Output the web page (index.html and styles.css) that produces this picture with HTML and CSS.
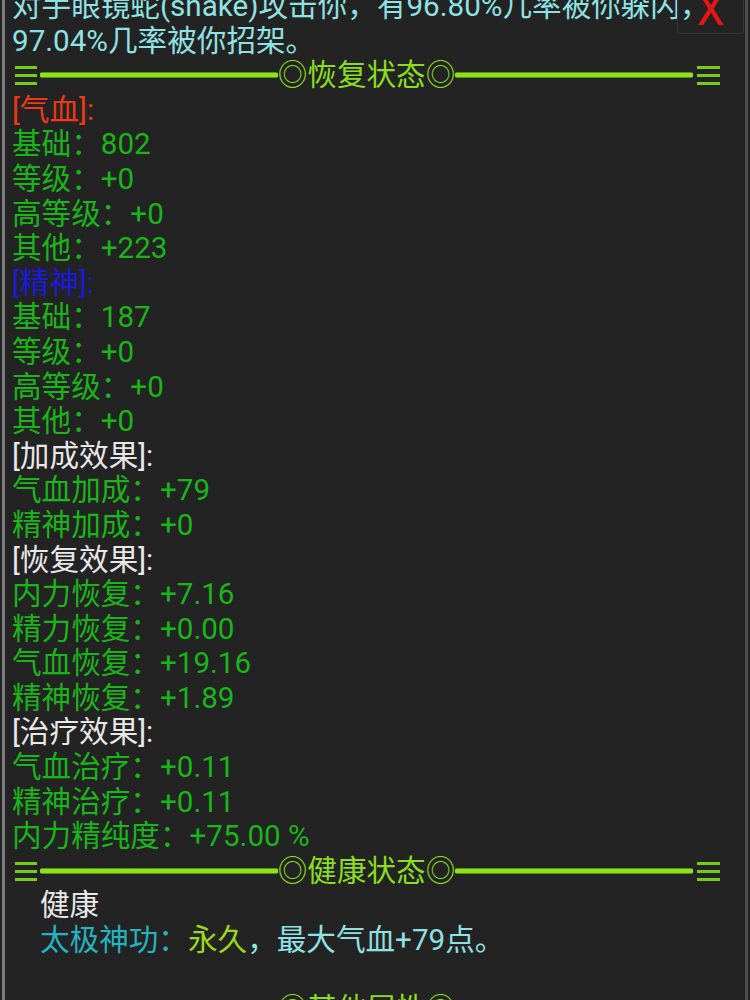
FILE: index.html
```html
<!DOCTYPE html>
<html lang="zh-CN">
<head>
    <meta charset="UTF-8">
    <meta name="viewport" content="width=device-width, initial-scale=1.0">
    <title>恢复状态</title>
    <link rel="stylesheet" href="styles.css">
</head>
<body>
    <div class="panel">
        <div class="close">X</div>

        <div class="log">
            <p class="msg">对手眼镜蛇(snake)攻击你，有96.80%几率被你躲闪，97.04%几率被你招架。</p>

            <div class="divider">
                <span class="eq"><i></i><i></i><i></i></span>
                <span class="rule"></span>
                <span class="title">◎恢复状态◎</span>
                <span class="rule"></span>
                <span class="eq"><i></i><i></i><i></i></span>
            </div>

            <p class="red">[气血]:</p>
            <p class="green">基础：802</p>
            <p class="green">等级：+0</p>
            <p class="green">高等级：+0</p>
            <p class="green">其他：+223</p>
            <p class="blue">[精神]:</p>
            <p class="green">基础：187</p>
            <p class="green">等级：+0</p>
            <p class="green">高等级：+0</p>
            <p class="green">其他：+0</p>
            <p class="white">[加成效果]:</p>
            <p class="green">气血加成：+79</p>
            <p class="green">精神加成：+0</p>
            <p class="white">[恢复效果]:</p>
            <p class="green">内力恢复：+7.16</p>
            <p class="green">精力恢复：+0.00</p>
            <p class="green">气血恢复：+19.16</p>
            <p class="green">精神恢复：+1.89</p>
            <p class="white">[治疗效果]:</p>
            <p class="green">气血治疗：+0.11</p>
            <p class="green">精神治疗：+0.11</p>
            <p class="green">内力精纯度：+75.00 %</p>

            <div class="divider">
                <span class="eq"><i></i><i></i><i></i></span>
                <span class="rule"></span>
                <span class="title">◎健康状态◎</span>
                <span class="rule"></span>
                <span class="eq"><i></i><i></i><i></i></span>
            </div>

            <div class="health">
                <p class="white">健康</p>
                <p><span class="skill">太极神功：</span><span class="lime">永久</span><span class="msg">，最大气血+79点。</span></p>
                <p>&nbsp;</p>
            </div>

            <div class="divider">
                <span class="eq"><i></i><i></i><i></i></span>
                <span class="rule"></span>
                <span class="title">◎其他属性◎</span>
                <span class="rule"></span>
                <span class="eq"><i></i><i></i><i></i></span>
            </div>
        </div>
    </div>
</body>
</html>
```

FILE: styles.css
```css
* {
    margin: 0;
    padding: 0;
    box-sizing: border-box;
}

body {
    background: #232323;
    font-family: Roboto, "Noto Sans CJK SC", sans-serif;
    font-size: 29.6px;
    line-height: 34.6px;
    overflow: hidden;
}

.panel {
    position: relative;
    height: 100vh;
    margin: 0 2px;
    border-left: 3px solid #7a7a7a;
    border-right: 3px solid #4e4e4e;
    overflow: hidden;
}

.log {
    margin-top: -11px;
    padding-left: 7px;
}

.log p {
    white-space: pre-wrap;
}

/* colours */
.msg {
    color: #8fe2e4;
}

.red {
    color: #ec3a16;
}

.blue {
    color: #1a1adc;
}

.green {
    color: #19b519;
}

.white {
    color: #e8e8e8;
}

.skill {
    color: #22b4c2;
}

.lime {
    color: #9cd91a;
}

/* section divider */
.divider {
    display: flex;
    align-items: center;
    width: 705px;
    height: 34.6px;
    margin-left: 3px;
    color: #8ade1c;
}

.divider .title {
    white-space: nowrap;
}

.rule {
    flex: 1;
    height: 6px;
    border-radius: 2px;
    background: linear-gradient(#3c6a0e, #8fe31b 25%, #8fe31b 75%, #3c6a0e);
}

.eq {
    display: flex;
    flex-direction: column;
    gap: 5px;
    width: 22px;
}

.eq:first-child {
    margin-right: 3px;
}

.eq:last-child {
    width: 23px;
    margin-left: 4px;
}

.eq i {
    display: block;
    height: 3px;
    background: #78cc18;
}

.health {
    padding-left: 28px;
}

/* close button */
.close {
    position: absolute;
    top: -3px;
    right: 1px;
    width: 67px;
    height: 37px;
    border: 1px solid #363636;
    border-radius: 3px;
    color: #e41616;
    font-family: Roboto, sans-serif;
    font-size: 44px;
    line-height: 24px;
    text-align: center;
    z-index: 10;
}
```
